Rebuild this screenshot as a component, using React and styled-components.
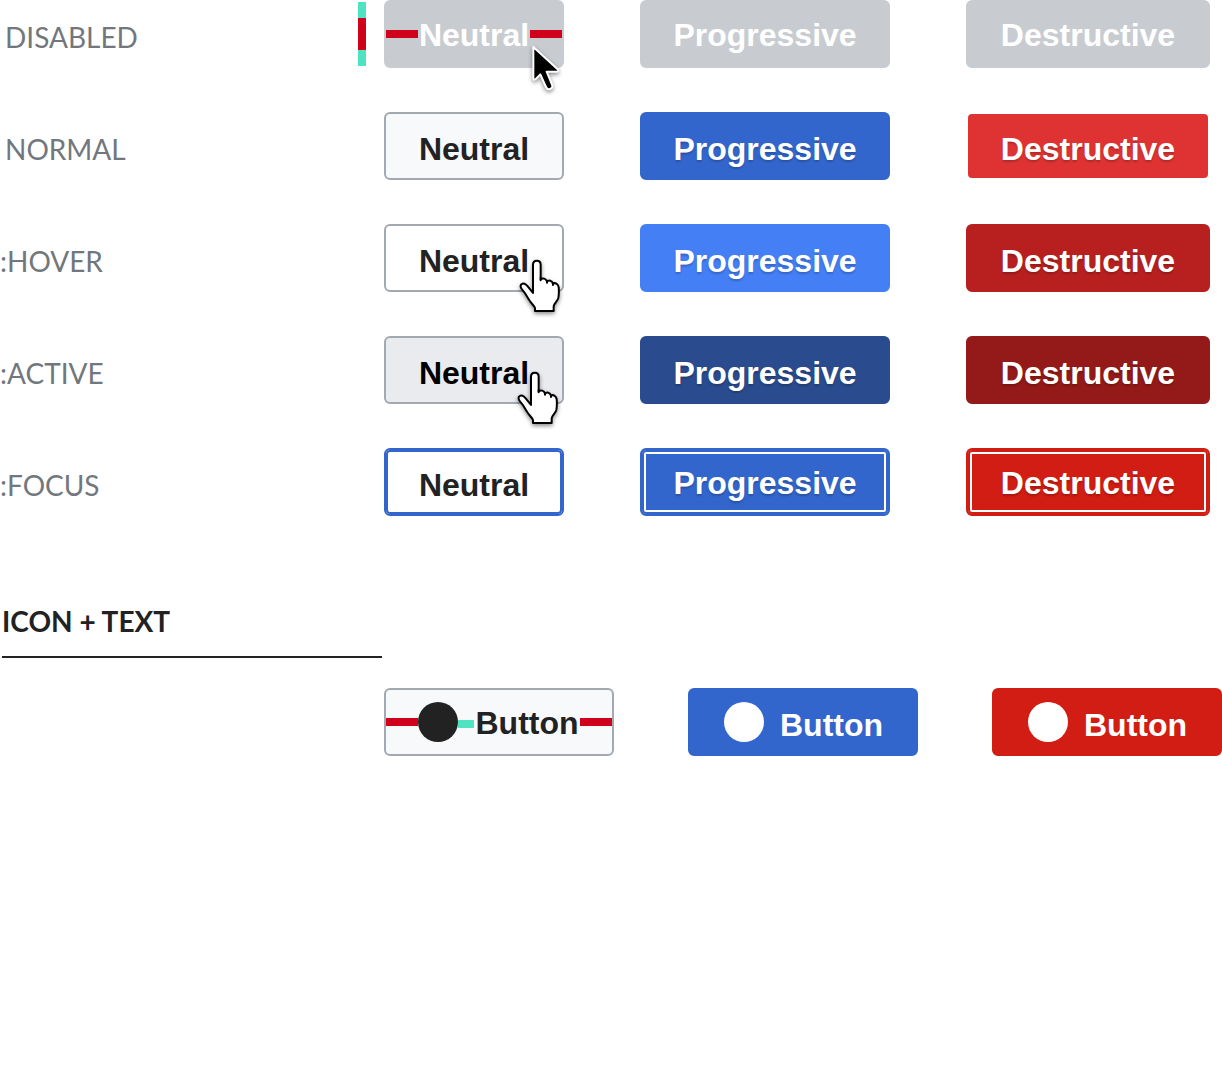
import React from "react";
import styled, { createGlobalStyle, css } from "styled-components";

const GlobalStyle = createGlobalStyle`
  *, *::before, *::after { box-sizing: border-box; }
  body { margin: 0; background: #fff; }
`;

const Page = styled.main`
  font-family: Lato, "Liberation Sans", sans-serif;
  font-size: 28px;
  line-height: 34px;
  color: #72777d;
`;

const StateTable = styled.section`
  display: flex;
  flex-direction: column;
  gap: 44px;
  padding-right: 12px;
`;

const StateRow = styled.div`
  display: grid;
  grid-template-columns: minmax(384px, 1fr) 180px 76px 250px 76px 244px;
`;

const LabelCell = styled.div`
  display: flex;
  justify-content: space-between;
  align-items: center;
  padding-right: 18px;
`;

const StateLabel = styled.span`
  padding-top: 6px;
  padding-left: ${(p) => (p.$pseudo ? 0 : 5)}px;
`;

const ButtonCell = styled.div`
  position: relative;
  display: grid;
  grid-column: ${(p) => p.$column};
`;

const focusRing = css`
  box-shadow: inset 0 0 0 2px ${(p) => p.$look.border}, inset 0 0 0 4px #fff;
`;

const Button = styled.button`
  display: flex;
  align-items: center;
  justify-content: center;
  height: 68px;
  margin: 0;
  padding: 0;
  border: 2px solid ${(p) => p.$look.border};
  border-radius: 6px;
  background: ${(p) => p.$look.fill};
  background-clip: ${(p) => (p.$look.border === "transparent" ? "padding-box" : "border-box")};
  color: ${(p) => p.$look.text};
  font: bold 32px/40px "Liberation Sans", Arial, sans-serif;
  text-shadow: ${(p) => (p.$look.shadow ? "0 2px 2px rgba(0, 0, 0, 0.2)" : "none")};
  white-space: nowrap;
  ${(p) => p.$look.ring && focusRing}
`;

const IconButton = styled(Button)`
  width: 230px;
  justify-content: ${(p) => (p.$measured ? "space-between" : "flex-start")};
  padding: ${(p) => (p.$measured ? "0" : "0 34px")};
  gap: ${(p) => (p.$measured ? 0 : 16)}px;
`;

const ButtonText = styled.span`
  flex: ${(p) => (p.$fill ? "1" : "none")};
  padding-top: ${(p) => (p.$lowered ? 6 : 2)}px;
  text-align: center;
`;

const Dot = styled.span`
  flex: none;
  width: 40px;
  height: 40px;
  border-radius: 50%;
  background: currentColor;
`;

const Measure = styled.span`
  flex: none;
  width: ${(p) => p.$length}px;
  height: 8px;
  background: ${(p) => p.$color};
`;

const GapMeasure = styled(Measure)`
  margin-top: 4px;
`;

const HeightMeasure = styled.span`
  display: flex;
  flex-direction: column;
  width: 8px;
`;

const HeightPart = styled.span`
  height: ${(p) => p.$length}px;
  background: ${(p) => p.$color};
`;

const Heading = styled.h2`
  width: 380px;
  margin: 88px 0 30px 2px;
  padding-bottom: 18px;
  border-bottom: 2px solid #222;
  color: #222;
  font-size: 28px;
  line-height: 34px;
  font-weight: bold;
`;

const IconRow = styled.section`
  display: flex;
  justify-content: flex-end;
  gap: 74px;
`;

const Cursor = styled.svg`
  position: absolute;
  left: ${(p) => p.$left}px;
  top: ${(p) => p.$top}px;
  overflow: visible;
  pointer-events: none;
  filter: drop-shadow(0 2px 2px rgba(0, 0, 0, 0.45));
`;

const RED = "#d0021b";
const TEAL = "#50e3c2";

const disabled = { fill: "#c8ccd1", border: "#c8ccd1", text: "#fff" };
const solid = (fill) => ({ fill, border: fill, text: "#fff", shadow: true });

const states = [
  {
    label: "DISABLED",
    looks: [disabled, disabled, disabled],
    disabled: true,
    lowered: [false, false, false],
  },
  {
    label: "NORMAL",
    looks: [
      { fill: "#f8f9fb", border: "#a2a9b1", text: "#222" },
      solid("#3366cc"),
      { fill: "#df3333", border: "transparent", text: "#fff", shadow: true },
    ],
    lowered: [true, true, true],
  },
  {
    label: ":HOVER",
    looks: [
      { fill: "#fff", border: "#a2a9b1", text: "#222" },
      solid("#447ff5"),
      solid("#b82020"),
    ],
    lowered: [true, true, true],
    hand: 133,
  },
  {
    label: ":ACTIVE",
    looks: [
      { fill: "#eaebef", border: "#a2a9b1", text: "#000" },
      solid("#2a4b8d"),
      solid("#931a18"),
    ],
    lowered: [true, true, true],
    hand: 131,
  },
  {
    label: ":FOCUS",
    looks: [
      { fill: "#fff", border: "#3366cc", text: "#222", ring: true },
      { ...solid("#3366cc"), ring: true },
      { ...solid("#d11d13"), ring: true },
    ],
    lowered: [true, false, false],
  },
];

const kinds = ["Neutral", "Progressive", "Destructive"];

function ArrowCursor() {
  return (
    <Cursor $left={142} $top={40} width="40" height="56" viewBox="558 120 120 168" aria-hidden="true">
      <path
        d="M580 141V236Q581 242 586 238L601 223L618 261Q622 270 630 267Q640 264 636 254L620 215H650Q658 213 653 208Z"
        fill="#000"
        stroke="#fff"
        strokeWidth="6"
        strokeLinejoin="round"
      />
    </Cursor>
  );
}

function HandCursor({ left }) {
  return (
    <Cursor
      $left={left}
      $top={33}
      width="48"
      height="60"
      viewBox="51 51 144 180"
      fill="none"
      stroke="#000"
      strokeWidth="6"
      strokeLinecap="round"
      strokeLinejoin="round"
      aria-hidden="true"
    >
      <path
        d="M99 159V74C99 58 122 58 122 74V118C128 113 138 115 141 125C146 119 156 121 159 131C165 127 174 131 176 141C177 151 177 162 175 174C172 184 162 190 161 199V213H105V204C102 196 92 189 87 179C81 168 75 158 66 148C60 141 60 133 67 131C75 129 82 137 88 145Z"
        fill="#fff"
      />
      <path d="M122 114V121M141 122V128M159 129V135" />
    </Cursor>
  );
}

function StateButton({ state, index }) {
  const measured = state.disabled && index === 0;
  return (
    <ButtonCell $column={2 + index * 2}>
      <Button type="button" disabled={state.disabled} $look={state.looks[index]}>
        {measured && <Measure $length={32} $color={RED} />}
        <ButtonText $fill={measured} $lowered={state.lowered[index]}>
          {kinds[index]}
        </ButtonText>
        {measured && <Measure $length={32} $color={RED} />}
      </Button>
      {measured && <ArrowCursor />}
      {index === 0 && state.hand && <HandCursor left={state.hand} />}
    </ButtonCell>
  );
}

export default function App() {
  return (
    <Page>
      <GlobalStyle />
      <StateTable>
        {states.map((state) => (
          <StateRow key={state.label}>
            <LabelCell>
              <StateLabel $pseudo={state.label.startsWith(":")}>{state.label}</StateLabel>
              {state.disabled && (
                <HeightMeasure>
                  <HeightPart $length={16} $color={TEAL} />
                  <HeightPart $length={32} $color={RED} />
                  <HeightPart $length={16} $color={TEAL} />
                </HeightMeasure>
              )}
            </LabelCell>
            {kinds.map((kind, index) => (
              <StateButton key={kind} state={state} index={index} />
            ))}
          </StateRow>
        ))}
      </StateTable>
      <Heading>ICON + TEXT</Heading>
      <IconRow>
        <IconButton type="button" $measured $look={states[1].looks[0]}>
          <Measure $length={32} $color={RED} />
          <Dot />
          <GapMeasure $length={16} $color={TEAL} />
          <ButtonText $fill>Button</ButtonText>
          <Measure $length={32} $color={RED} />
        </IconButton>
        {["#3366cc", "#d11d13"].map((fill) => (
          <IconButton key={fill} type="button" $look={{ fill, border: fill, text: "#fff" }}>
            <Dot />
            <ButtonText $lowered>Button</ButtonText>
          </IconButton>
        ))}
      </IconRow>
    </Page>
  );
}
